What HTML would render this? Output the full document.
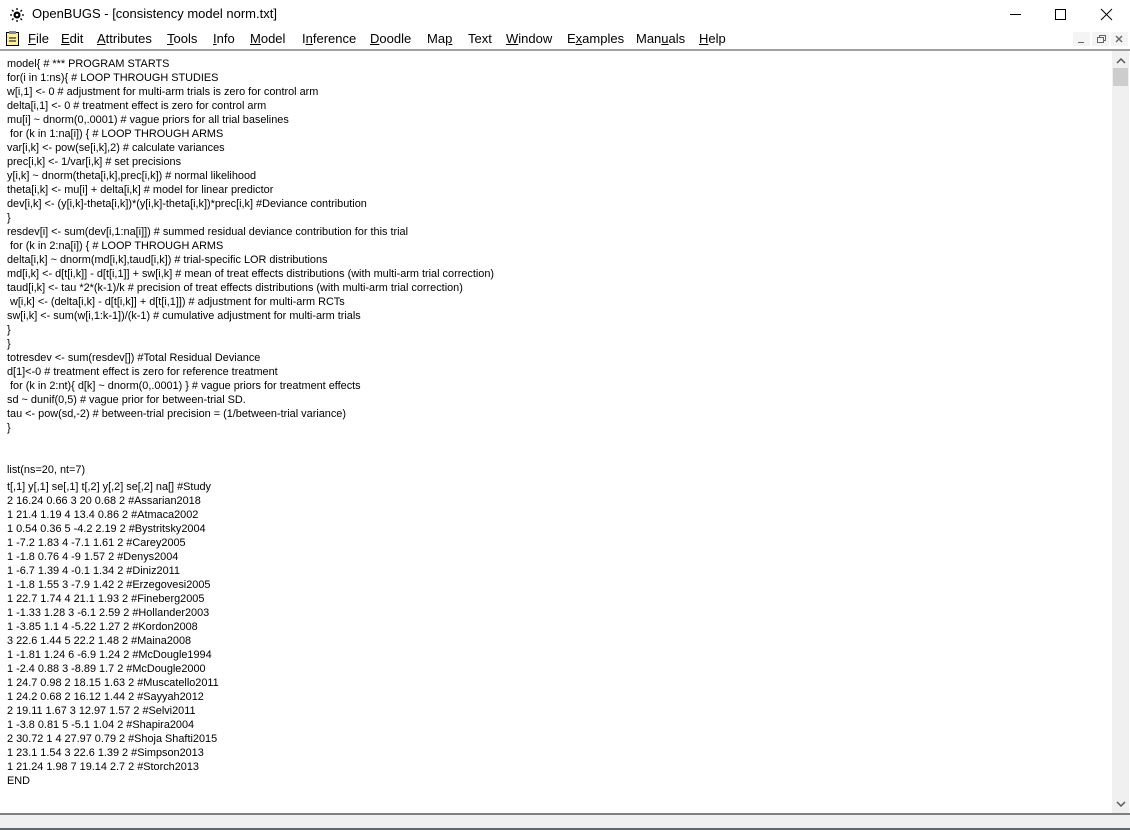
<!DOCTYPE html>
<html><head><style>
body{margin:0;width:1130px;height:830px;overflow:hidden;background:#fff;font-family:"Liberation Sans",Arial,sans-serif;position:relative}
.title{position:absolute;left:0;top:0;width:1130px;height:28px;background:#fff}
.title span{position:absolute;left:32px;top:6px;font-size:13px;color:#000}
.menu{position:absolute;left:0;top:28px;width:1130px;height:21px;background:#fff;border-bottom:2px solid #a0a0a0}
.menu span{position:absolute;top:3px;font-size:13px;color:#000}
.menu u{text-decoration:underline}
.txt{position:absolute;left:7px;margin:0;font-family:"Liberation Sans",Arial,sans-serif;font-size:10.9px;line-height:14px;color:#000;white-space:pre}
.sb{position:absolute;left:1112px;top:51px;width:17px;height:762px;background:#f0f0f0}
.status{position:absolute;left:0;top:813px;width:1130px;height:13px;background:#f0f0f0;border-top:2px solid #808080;border-bottom:2px solid #606870}
</style></head><body>
<div class="title">
<svg style="position:absolute;left:9px;top:7px" width="16" height="16" viewBox="0 0 16 16"><circle cx="8" cy="8" r="3.5" fill="#000"/><circle cx="8" cy="8" r="1.3" fill="#fff"/><g stroke="#000" stroke-width="1.3"><line x1="8" y1="1" x2="8" y2="3"/><line x1="8" y1="13" x2="8" y2="15"/><line x1="1" y1="8" x2="3" y2="8"/><line x1="13" y1="8" x2="15" y2="8"/><line x1="3" y1="3" x2="4.5" y2="4.5"/><line x1="11.5" y1="11.5" x2="13" y2="13"/><line x1="13" y1="3" x2="11.5" y2="4.5"/><line x1="3" y1="13" x2="4.5" y2="11.5"/></g></svg>
<span>OpenBUGS - [consistency model norm.txt]</span>
<svg style="position:absolute;left:1010px;top:8px" width="110" height="14"><line x1="0" y1="6.5" x2="11" y2="6.5" stroke="#000"/><rect x="45.5" y="1.5" width="10" height="10" fill="none" stroke="#000"/><path d="M91 1L102 12M102 1L91 12" stroke="#000"/></svg>
</div>
<div class="menu">
<svg style="position:absolute;left:6px;top:3px" width="14" height="15"><rect x="0.5" y="1.5" width="12" height="13" fill="#ffef9c" stroke="#000"/><rect x="3" y="0" width="7" height="3" fill="#888"/><line x1="3" y1="7" x2="10" y2="7" stroke="#000"/><line x1="3" y1="10" x2="10" y2="10" stroke="#000"/></svg>
<span style="left:28px"><u>F</u>ile</span>
<span style="left:61px"><u>E</u>dit</span>
<span style="left:97px"><u>A</u>ttributes</span>
<span style="left:167px"><u>T</u>ools</span>
<span style="left:213px"><u>I</u>nfo</span>
<span style="left:250px"><u>M</u>odel</span>
<span style="left:302px">I<u>n</u>ference</span>
<span style="left:370px"><u>D</u>oodle</span>
<span style="left:427px">Ma<u>p</u></span>
<span style="left:468px">Text</span>
<span style="left:506px"><u>W</u>indow</span>
<span style="left:567px">E<u>x</u>amples</span>
<span style="left:636px">Man<u>u</u>als</span>
<span style="left:699px"><u>H</u>elp</span>
<svg style="position:absolute;left:1073px;top:4px" width="56" height="14"><rect x="0" y="0" width="17" height="14" fill="#f4f4f4"/><rect x="19" y="0" width="17" height="14" fill="#f4f4f4"/><rect x="38" y="0" width="17" height="14" fill="#f4f4f4"/><line x1="5" y1="10.5" x2="11" y2="10.5" stroke="#666"/><rect x="24.5" y="5.5" width="6" height="5" fill="none" stroke="#666"/><path d="M26.5 5.5V3.5H32.5V8.5H30.5" fill="none" stroke="#666"/><path d="M43 4L49 10M49 4L43 10" stroke="#666" stroke-width="1.4"/></svg>
</div>
<pre class="txt" style="top:57px">model{ # *** PROGRAM STARTS
for(i in 1:ns){ # LOOP THROUGH STUDIES
w[i,1] &lt;- 0 # adjustment for multi-arm trials is zero for control arm
delta[i,1] &lt;- 0 # treatment effect is zero for control arm
mu[i] ~ dnorm(0,.0001) # vague priors for all trial baselines
 for (k in 1:na[i]) { # LOOP THROUGH ARMS
var[i,k] &lt;- pow(se[i,k],2) # calculate variances
prec[i,k] &lt;- 1/var[i,k] # set precisions
y[i,k] ~ dnorm(theta[i,k],prec[i,k]) # normal likelihood
theta[i,k] &lt;- mu[i] + delta[i,k] # model for linear predictor
dev[i,k] &lt;- (y[i,k]-theta[i,k])*(y[i,k]-theta[i,k])*prec[i,k] #Deviance contribution
}
resdev[i] &lt;- sum(dev[i,1:na[i]]) # summed residual deviance contribution for this trial
 for (k in 2:na[i]) { # LOOP THROUGH ARMS
delta[i,k] ~ dnorm(md[i,k],taud[i,k]) # trial-specific LOR distributions
md[i,k] &lt;- d[t[i,k]] - d[t[i,1]] + sw[i,k] # mean of treat effects distributions (with multi-arm trial correction)
taud[i,k] &lt;- tau *2*(k-1)/k # precision of treat effects distributions (with multi-arm trial correction)
 w[i,k] &lt;- (delta[i,k] - d[t[i,k]] + d[t[i,1]]) # adjustment for multi-arm RCTs
sw[i,k] &lt;- sum(w[i,1:k-1])/(k-1) # cumulative adjustment for multi-arm trials
}
}
totresdev &lt;- sum(resdev[]) #Total Residual Deviance
d[1]&lt;-0 # treatment effect is zero for reference treatment
 for (k in 2:nt){ d[k] ~ dnorm(0,.0001) } # vague priors for treatment effects
sd ~ dunif(0,5) # vague prior for between-trial SD.
tau &lt;- pow(sd,-2) # between-trial precision = (1/between-trial variance)
}


list(ns=20, nt=7)</pre>
<pre class="txt" style="top:480px">t[,1] y[,1] se[,1] t[,2] y[,2] se[,2] na[] #Study
2 16.24 0.66 3 20 0.68 2 #Assarian2018
1 21.4 1.19 4 13.4 0.86 2 #Atmaca2002
1 0.54 0.36 5 -4.2 2.19 2 #Bystritsky2004
1 -7.2 1.83 4 -7.1 1.61 2 #Carey2005
1 -1.8 0.76 4 -9 1.57 2 #Denys2004
1 -6.7 1.39 4 -0.1 1.34 2 #Diniz2011
1 -1.8 1.55 3 -7.9 1.42 2 #Erzegovesi2005
1 22.7 1.74 4 21.1 1.93 2 #Fineberg2005
1 -1.33 1.28 3 -6.1 2.59 2 #Hollander2003
1 -3.85 1.1 4 -5.22 1.27 2 #Kordon2008
3 22.6 1.44 5 22.2 1.48 2 #Maina2008
1 -1.81 1.24 6 -6.9 1.24 2 #McDougle1994
1 -2.4 0.88 3 -8.89 1.7 2 #McDougle2000
1 24.7 0.98 2 18.15 1.63 2 #Muscatello2011
1 24.2 0.68 2 16.12 1.44 2 #Sayyah2012
2 19.11 1.67 3 12.97 1.57 2 #Selvi2011
1 -3.8 0.81 5 -5.1 1.04 2 #Shapira2004
2 30.72 1 4 27.97 0.79 2 #Shoja Shafti2015
1 23.1 1.54 3 22.6 1.39 2 #Simpson2013
1 21.24 1.98 7 19.14 2.7 2 #Storch2013
END</pre>
<div class="sb">
<svg style="position:absolute;left:4px;top:6px" width="10" height="8"><path d="M1 6L5 2L9 6" fill="none" stroke="#555" stroke-width="1.5"/></svg>
<div style="position:absolute;left:1px;top:17px;width:15px;height:18px;background:#cdcdcd"></div>
<svg style="position:absolute;left:4px;top:749px" width="10" height="8"><path d="M1 2L5 6L9 2" fill="none" stroke="#555" stroke-width="1.5"/></svg>
</div>
<div class="status"></div>
</body></html>
